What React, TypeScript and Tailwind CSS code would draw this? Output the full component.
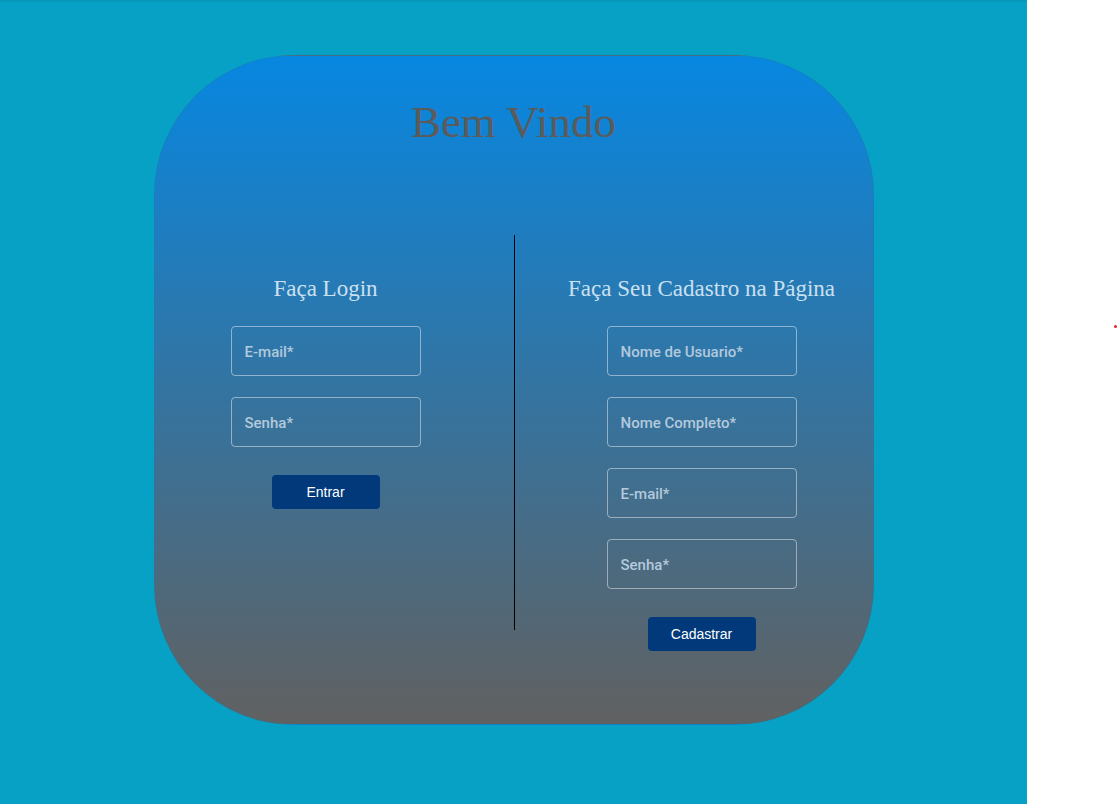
import React from 'react'

const serif = { fontFamily: '"Liberation Serif", "Times New Roman", serif' }

function Field({ placeholder, type = 'text' }: { placeholder: string; type?: string }) {
  return (
    <input
      type={type}
      placeholder={placeholder}
      className="w-[190px] h-[50px] rounded-[4px] border border-white/45 bg-transparent px-[13px] pt-[2px] text-[15px] font-medium text-white placeholder:text-[#b3c9dc] outline-none font-['Roboto',sans-serif]"
    />
  )
}

function SubmitButton({ label }: { label: string }) {
  return (
    <button className="mt-[28px] w-[108px] h-[34px] rounded-[4px] bg-[#01397a] text-white text-[14px] font-['Liberation_Sans',Arial,sans-serif]">
      {label}
    </button>
  )
}

export default function App() {
  return (
    <div className="relative flex w-[1119px] h-[804px] bg-white">
      {/* Main teal area */}
      <div className="w-[1027px] h-[804px] bg-[#07a1c5] border-t-[2px] border-[#0799bb] flex justify-center pt-[53px]">
        {/* Card */}
        <div className="w-[720px] h-[670px] rounded-[140px] border border-[#1b7fa8]/40 bg-[linear-gradient(to_bottom,#0787e1,#616161)] flex flex-col items-center">
          <h1 style={serif} className="pt-[41px] text-[45px] leading-[50px] text-[#5b5b5b]">
            Bem Vindo
          </h1>

          <div className="mt-[88px] flex items-start">
            {/* Login */}
            <div className="w-[344px] pt-[41px] flex flex-col items-center">
              <h2 style={serif} className="text-[23px] leading-[26px] text-[#cbe0f0]">
                Faça Login
              </h2>
              <div className="mt-[24px] flex flex-col gap-[21px]">
                <Field placeholder="E-mail*" type="email" />
                <Field placeholder="Senha*" type="password" />
              </div>
              <SubmitButton label="Entrar" />
            </div>

            {/* Divider */}
            <div className="ml-[16px] mr-[15px] w-px h-[395px] bg-black" />

            {/* Cadastro */}
            <div className="w-[344px] pt-[41px] flex flex-col items-center">
              <h2 style={serif} className="text-[23px] leading-[26px] text-[#cbe0f0]">
                Faça Seu Cadastro na Página
              </h2>
              <div className="mt-[24px] flex flex-col gap-[21px]">
                <Field placeholder="Nome de Usuario*" />
                <Field placeholder="Nome Completo*" />
                <Field placeholder="E-mail*" type="email" />
                <Field placeholder="Senha*" type="password" />
              </div>
              <SubmitButton label="Cadastrar" />
            </div>
          </div>
        </div>
      </div>

      {/* small red dot */}
      <div className="absolute left-[1114px] top-[325px] w-[3px] h-[3px] rounded-full bg-[#e8202a]" />
    </div>
  )
}
